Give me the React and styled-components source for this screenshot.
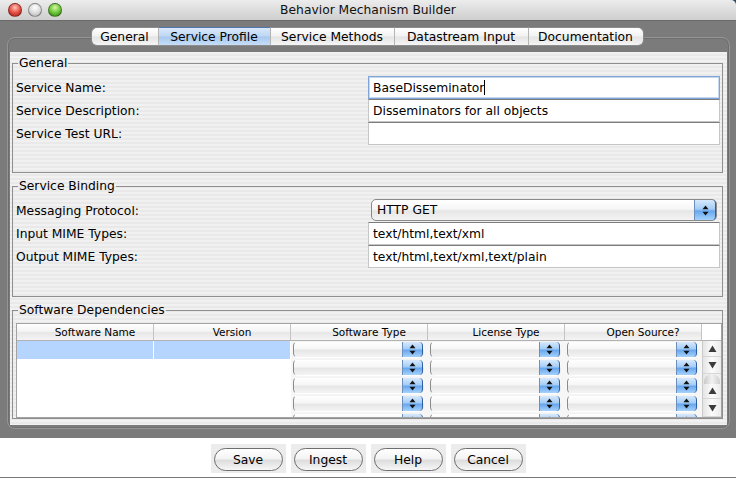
import React from 'react';
import styled, {createGlobalStyle} from 'styled-components';

const Global = createGlobalStyle`
html, body {
  margin: 0;
  padding: 0;
  background: #2f4a63;
}
body {
  font-family: "DejaVu Sans", "Liberation Sans", sans-serif;
  font-size: 12.3px;
  color: #000;
}
`;

const Window = styled.div`
width: 736px;
height: 478px;
display: flex;
flex-direction: column;
overflow: hidden;
border-top-right-radius: 5px;
`;

const TitleBar = styled.div`
height: 20px;
display: grid;
grid-template-columns: 1fr auto 1fr;
align-items: center;
background: linear-gradient(#ececec, #dadada 60%, #cfcfcf);
border-bottom: 1px solid #6a6a6a;
`;

const Lights = styled.div`
display: flex;
gap: 6px;
padding-left: 8px;
`;

const Light = styled.span`
width: 12px;
height: 12px;
border-radius: 50%;
border: 1px solid rgba(0, 0, 0, 0.35);
background: ${p => p.$c};
`;

const Title = styled.div`
color: #111;
`;

const Body = styled.div`
flex: 1;
background: #7b7b7b;
padding: 6px 6px 9px 7px;
display: flex;
flex-direction: column;
`;

const TabStrip = styled.div`
position: relative;
z-index: 1;
display: flex;
justify-content: center;
padding-right: 3px;
`;

const Tab = styled.div`
width: ${p => p.$w}px;
height: 19px;
box-sizing: border-box;
display: flex;
align-items: center;
justify-content: center;
border-top: 1px solid ${p => (p.$on ? '#4f76ad' : '#8a8a8a')};
border-bottom: 1px solid #8c8c8c;
border-left: 1px solid #b4b4b4;
background: ${p =>
  p.$on
    ? 'linear-gradient(#d9e8f9, #bed7f3 48%, #a7c8ee 52%, #c6def8)'
    : 'linear-gradient(#ffffff, #f2f2f2 48%, #e4e4e4 52%, #f5f5f5)'};
&:first-child {
  border-left: 1px solid #8a8a8a;
  border-radius: 6px 0 0 6px;
}
&:last-child {
  border-right: 1px solid #8a8a8a;
  border-radius: 0 6px 6px 0;
}
`;

const Pane = styled.div`
flex: 1;
margin-top: -9px;
padding: 14px 3px 3px 2px;
border: 1px solid #959595;
border-radius: 8px;
box-shadow: inset 0 0 0 1px #6e6e6e;
display: flex;
`;

const Sheet = styled.div`
flex: 1;
padding: 4px 4px 5px 2px;
display: flex;
flex-direction: column;
gap: 6px;
background: repeating-linear-gradient(#f1f1f1 0, #f1f1f1 2px, #e9e9e9 2px, #e9e9e9 4px);
`;

const Group = styled.fieldset`
margin: 0;
height: ${p => p.$h}px;
box-sizing: border-box;
padding: 6px 0 0 3px;
border: 1px solid #8e8e8e;
min-width: 0;
`;

const Legend = styled.legend`
padding: 0 1px;
margin-left: 2px;
line-height: 14px;
`;

const Form = styled.div`
display: grid;
grid-template-columns: 352px 352px;
grid-auto-rows: 23px;
align-items: center;
`;

const Label = styled.div`
line-height: 14px;
`;

const Field = styled.div`
height: 23px;
box-sizing: border-box;
display: flex;
align-items: center;
padding: 0 4px;
background: #fff;
border: 1px solid #c6c6c6;
border-top-color: #7c7c7c;
${p => p.$focus && 'border-color: #7ea5d6; box-shadow: inset 0 0 0 1px #c4d8f1;'}
white-space: nowrap;
`;

const Caret = styled.span`
display: inline-block;
width: 1px;
height: 15px;
background: #000;
`;

const Combo = styled.div`
height: ${p => p.$h}px;
box-sizing: border-box;
margin: ${p => p.$m};
display: flex;
align-items: stretch;
border: 1px solid ${p => (p.$flat ? 'transparent' : '#8a8a8a')};
border-left-color: #8a8a8a;
border-radius: 5px;
background: linear-gradient(#ffffff, #f6f6f6 45%, #e6e6e6 55%, #f4f4f4);
`;

const ComboText = styled.div`
flex: 1;
display: flex;
align-items: center;
padding-left: 5px;
`;

const Stepper = styled.div`
width: ${p => p.$w}px;
display: flex;
align-items: center;
justify-content: center;
border-left: 1px solid #6d8fbd;
border-right: 1px solid #2f5fa3;
border-radius: 0 4px 4px 0;
background: linear-gradient(#d7e9fc, #a4cdf7 45%, #67a7ee 55%, #a6d3fb);
`;

const Table = styled.div`
border: 1px solid #a2a2a2;
background: #fff;
`;

const Header = styled.div`
display: grid;
grid-template-columns: repeat(5, 137px) 18px;
height: 16px;
border-bottom: 1px solid #b2b2b2;
`;

const HeadCell = styled.div`
display: flex;
align-items: center;
justify-content: center;
padding-left: ${p => (p.$blank ? 0 : 20)}px;
font-size: 10.5px;
border-right: 1px solid #c3c3c3;
background: ${p => (p.$blank ? '#fff' : 'linear-gradient(#ffffff, #f3f3f3 48%, #e7e7e7 52%, #f4f4f4)')};
&:last-child {
  border-right: none;
}
`;

const TableBody = styled.div`
display: flex;
height: 76px;
overflow: hidden;
`;

const Rows = styled.div`
width: 685px;
`;

const Row = styled.div`
display: grid;
grid-template-columns: repeat(5, 137px);
height: 18px;
`;

const TextCell = styled.div`
background: ${p => (p.$sel ? '#b5d5ff' : '#fff')};
border-right: 1px solid #fff;
`;

const ComboCell = styled.div`
padding: 0 4px 1px 2px;
background: #f6f6f6;
`;

const Scroll = styled.div`
width: 18px;
display: flex;
flex-direction: column;
border-left: 1px solid #cacaca;
background: linear-gradient(to right, #e4e4e4, #fbfbfb 50%, #ebebeb);
`;

const ScrollBtn = styled.div`
height: ${p => p.$h}px;
display: flex;
align-items: center;
justify-content: center;
border-bottom: 1px solid #d6d6d6;
box-sizing: border-box;
`;

const Thumb = styled.div`
height: ${p => p.$h}px;
margin: 0 1px;
border-radius: 8px 8px 0 0;
background: linear-gradient(to right, #c9c9c9, #f2f2f2 50%, #cfcfcf);
`;

const Footer = styled.div`
height: 40px;
box-sizing: border-box;
background: #fff;
border-bottom: 1px solid #777;
display: flex;
justify-content: center;
align-items: flex-start;
padding-top: 6px;
gap: 5px;
`;

const Well = styled.div`
background: #ececec;
padding: 4px 3px 2px;
`;

const Button = styled.button`
width: 69px;
height: 23px;
border: 1px solid #6e6e6e;
border-radius: 12px;
background: linear-gradient(#ffffff, #f4f4f4 45%, #dddddd 55%, #f7f7f7);
font-family: "DejaVu Sans", "Liberation Sans", sans-serif;
font-size: 12.3px;
color: #000;
padding: 0;
`;

function Arrows() {
  return (
    <svg width="7" height="11" viewBox="0 0 7 11">
      <path d="M3.5 0.5 L6.5 4.2 H0.5Z" fill="#111" />
      <path d="M0.5 6.8 H6.5 L3.5 10.5Z" fill="#111" />
    </svg>
  );
}

function Tri({down}) {
  return (
    <svg width="9" height="8" viewBox="0 0 9 8">
      <path d={down ? 'M0.5 1 H8.5 L4.5 7.5Z' : 'M4.5 0.5 L8.5 7 H0.5Z'} fill="#3c3c3c" />
    </svg>
  );
}

const tabs = [
  ['General', 67],
  ['Service Profile', 112],
  ['Service Methods', 124],
  ['Datastream Input', 134],
  ['Documentation', 116],
];

const lights = [
  'radial-gradient(circle at 50% 30%, #ffc2b8, #e2483d 55%, #a3231b)',
  'radial-gradient(circle at 50% 30%, #ffffff, #dadada 55%, #a9a9a9)',
  'radial-gradient(circle at 50% 30%, #d6f7a0, #66c233 55%, #2f7b14)',
];

const columns = ['Software Name', 'Version', 'Software Type', 'License Type', 'Open Source?'];

export default function App() {
  return (
    <>
      <Global />
      <Window>
        <TitleBar>
          <Lights>
            {lights.map((c, i) => <Light key={i} $c={c} />)}
          </Lights>
          <Title>Behavior Mechanism Builder</Title>
          <div />
        </TitleBar>
        <Body>
          <TabStrip>
            {tabs.map(([name, w]) => (
              <Tab key={name} $w={w} $on={name === 'Service Profile'}>{name}</Tab>
            ))}
          </TabStrip>
          <Pane>
            <Sheet>
              <Group $h={117}>
                <Legend>General</Legend>
                <Form>
                  <Label>Service Name:</Label>
                  <Field $focus>BaseDisseminator<Caret /></Field>
                  <Label>Service Description:</Label>
                  <Field>Disseminators for all objects</Field>
                  <Label>Service Test URL:</Label>
                  <Field />
                </Form>
              </Group>
              <Group $h={118}>
                <Legend>Service Binding</Legend>
                <Form>
                  <Label>Messaging Protocol:</Label>
                  <Combo $h={22} $m="0 3px 1px 3px">
                    <ComboText>HTTP GET</ComboText>
                    <Stepper $w={20}><Arrows /></Stepper>
                  </Combo>
                  <Label>Input MIME Types:</Label>
                  <Field>text/html,text/xml</Field>
                  <Label>Output MIME Types:</Label>
                  <Field>text/html,text/xml,text/plain</Field>
                </Form>
              </Group>
              <Group $h={116}>
                <Legend>Software Dependencies</Legend>
                <Table>
                  <Header>
                    {columns.map(c => <HeadCell key={c}>{c}</HeadCell>)}
                    <HeadCell $blank />
                  </Header>
                  <TableBody>
                    <Rows>
                      {[0, 1, 2, 3, 4].map(r => (
                        <Row key={r}>
                          <TextCell $sel={r === 0} />
                          <TextCell $sel={r === 0} />
                          {[0, 1, 2].map(c => (
                            <ComboCell key={c}>
                              <Combo $h={17} $m="0" $flat>
                                <ComboText />
                                <Stepper $w={19}><Arrows /></Stepper>
                              </Combo>
                            </ComboCell>
                          ))}
                        </Row>
                      ))}
                    </Rows>
                    <Scroll>
                      <ScrollBtn $h={16}><Tri /></ScrollBtn>
                      <ScrollBtn $h={17}><Tri down /></ScrollBtn>
                      <Thumb $h={10} />
                      <ScrollBtn $h={15}><Tri /></ScrollBtn>
                      <ScrollBtn $h={18}><Tri down /></ScrollBtn>
                    </Scroll>
                  </TableBody>
                </Table>
              </Group>
            </Sheet>
          </Pane>
        </Body>
        <Footer>
          {['Save', 'Ingest', 'Help', 'Cancel'].map(b => (
            <Well key={b}><Button>{b}</Button></Well>
          ))}
        </Footer>
      </Window>
    </>
  );
}
